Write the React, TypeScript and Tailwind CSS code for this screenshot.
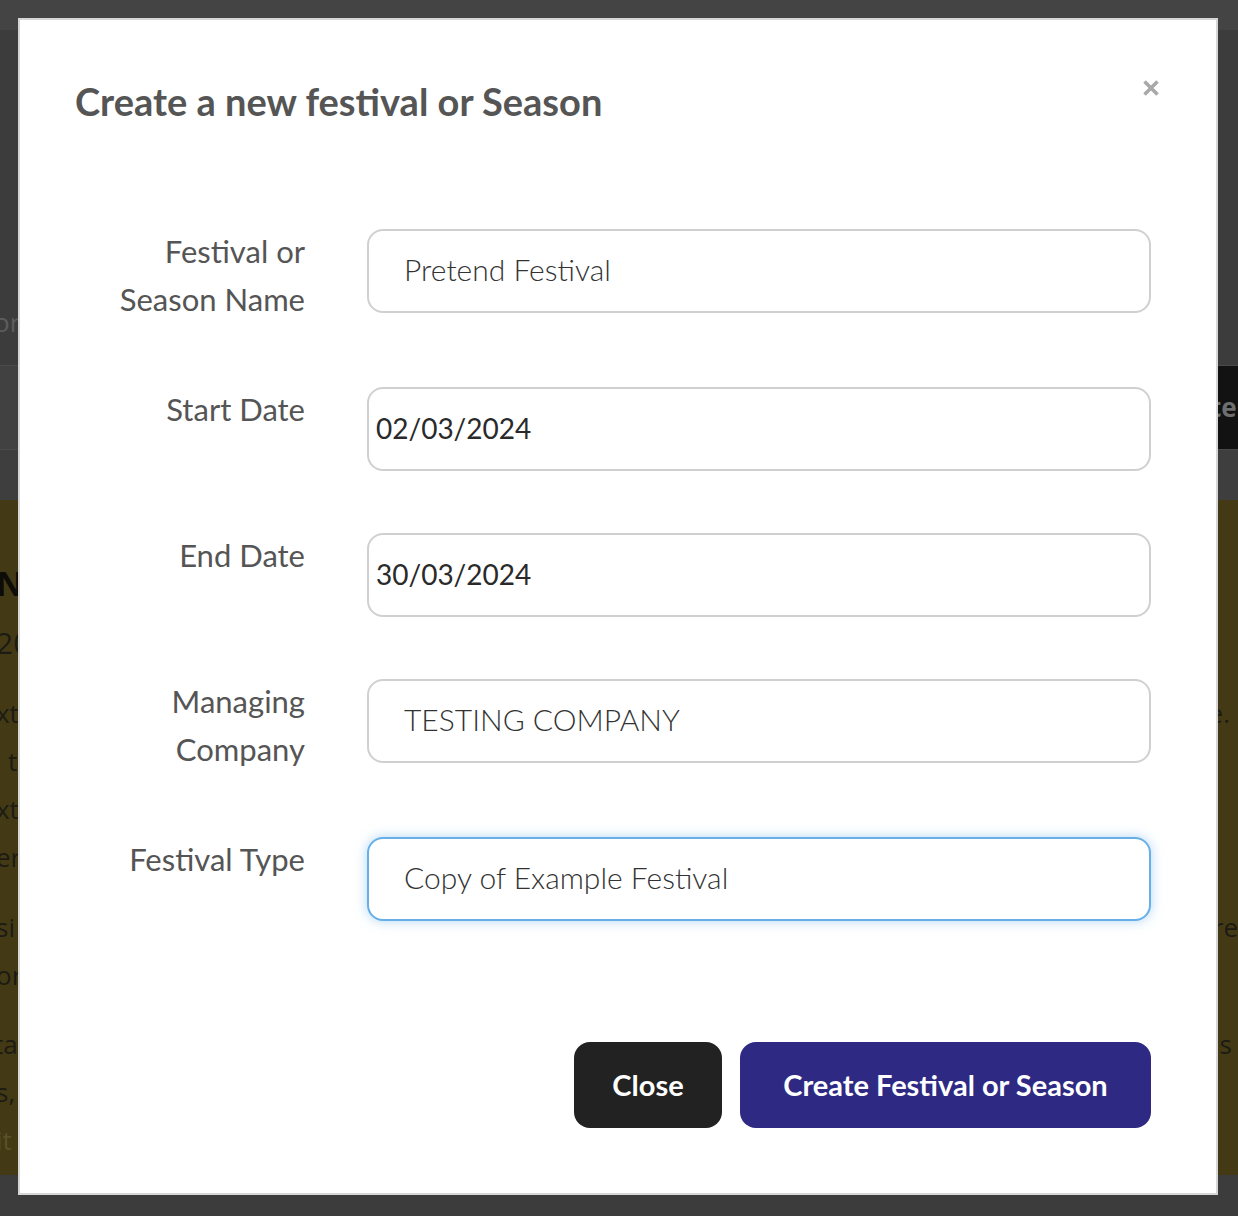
import React from "react";

function Row({
  label,
  value,
  narrowPad,
  focused,
}: {
  label: React.ReactNode;
  value: string;
  narrowPad?: boolean;
  focused?: boolean;
}) {
  return (
    <div className="flex gap-[62px] mb-[62px]">
      <div className="w-[230px] shrink-0 text-right text-[31px] leading-[48px] text-[#555555] -translate-y-[2px]">
        {label}
      </div>
      <input
        readOnly
        defaultValue={value}
        className={
          "w-[784px] h-[84px] shrink-0 rounded-[16px] border-2 bg-white outline-none " +
          (narrowPad
            ? "pl-[7px] pb-[2px] font-normal text-[28px] text-[#2a2a2a] "
            : "pl-[35px] pb-[4px] font-light text-[30px] text-[#333333] ") +
          (focused
            ? "border-[#66afe9] shadow-[0_0_12px_rgba(102,175,233,0.5)]"
            : "border-[#d0d0d0]")
        }
      />
    </div>
  );
}

export default function App() {
  return (
    <div className="relative w-[1238px] h-[1216px] overflow-hidden bg-[#3d3d3d] font-['Lato',sans-serif]">
      {/* underlying page (dimmed) */}
      <div className="flex flex-col h-full font-['Open_Sans',sans-serif]">
        <div className="h-[30px] bg-[#444444]" />
        <div className="h-[335px] bg-[#3c3c3c] flex items-end pb-[28px]">
          <span className="text-[26px] leading-[30px] text-[#5c5c5c] -ml-[6px]">or</span>
        </div>
        <div className="h-[85px] flex justify-between border-y border-[#4a4a4a] bg-[#414141]">
          <div />
          <div className="bg-[#121212] w-[24px] flex items-center overflow-hidden">
            <span className="text-[26px] font-bold text-[#6e6e6e] -ml-[4px]">te</span>
          </div>
        </div>
        <div className="h-[50px] bg-[#3e3e3e]" />
        <div className="h-[675px] bg-[#433a15] pt-[59px] text-[#1c1a12]">
          <div className="h-[48px] leading-[48px] text-[34px] font-bold text-[#0d0c07] -ml-[4px]">N</div>
          <div className="h-[48px] leading-[48px] text-[30px] mt-[12px] -ml-[4px]">20</div>
          <div className="mt-[22px] text-[26px] leading-[48px]">
            <div className="flex justify-between"><span className="-ml-[4px]">xt</span><span className="mr-[8px]">e.</span></div>
            <div className="flex justify-between"><span className="ml-[8px]">t</span><span /></div>
            <div className="flex justify-between"><span className="-ml-[4px]">xt</span><span /></div>
            <div className="flex justify-between"><span className="-ml-[4px]">er.</span><span /></div>
          </div>
          <div className="mt-[22px] text-[26px] leading-[48px]">
            <div className="flex justify-between"><span className="-ml-[4px]">si</span><span className="mr-[0px]">re</span></div>
            <div className="flex justify-between"><span className="-ml-[4px]">or</span><span /></div>
          </div>
          <div className="mt-[21px] text-[26px] leading-[48px]">
            <div className="flex justify-between"><span className="-ml-[6px]">ta</span><span className="mr-[6px]">s</span></div>
            <div className="flex justify-between"><span className="-ml-[4px]">s,</span><span /></div>
            <div className="flex justify-between"><span className="-ml-[4px] text-[#5a4f28]">it</span><span /></div>
          </div>
        </div>
        <div className="flex-1 bg-[#3c3c3c]" />
      </div>

      {/* modal */}
      <div className="absolute left-[18px] top-[18px] w-[1200px] h-[1177px] bg-white border-2 border-[#d6d6d6] pl-[55px] pr-[65px] pt-[59px]">
        <button className="absolute left-[1122px] top-[59px] w-[18px] h-[18px]" aria-label="close">
          <svg viewBox="0 0 18 18" width="18" height="18">
            <path d="M2.5 2.5 L15.5 15.5 M15.5 2.5 L2.5 15.5" stroke="#a9a9a9" strokeWidth="3.6" strokeLinecap="butt" />
          </svg>
        </button>
        <h2 className="text-[38px] leading-[1.2] font-bold text-[#555555]">Create a new festival or Season</h2>

        <div className="mt-[104px]">
          <Row label={<>Festival or<br />Season Name</>} value="Pretend Festival" />
          <Row label="Start Date" value="02/03/2024" narrowPad />
          <Row label="End Date" value="30/03/2024" narrowPad />
          <Row label={<>Managing<br />Company</>} value="TESTING COMPANY" />
          <Row label="Festival Type" value="Copy of Example Festival" focused />
        </div>

        <div className="flex justify-end gap-[18px] mt-[121px]">
          <button className="w-[148px] h-[86px] rounded-[16px] bg-[#222222] text-white text-[29px] font-bold">
            Close
          </button>
          <button className="w-[411px] h-[86px] rounded-[16px] bg-[#2e2a84] text-white text-[29px] font-bold">
            Create Festival or Season
          </button>
        </div>
      </div>
    </div>
  );
}
